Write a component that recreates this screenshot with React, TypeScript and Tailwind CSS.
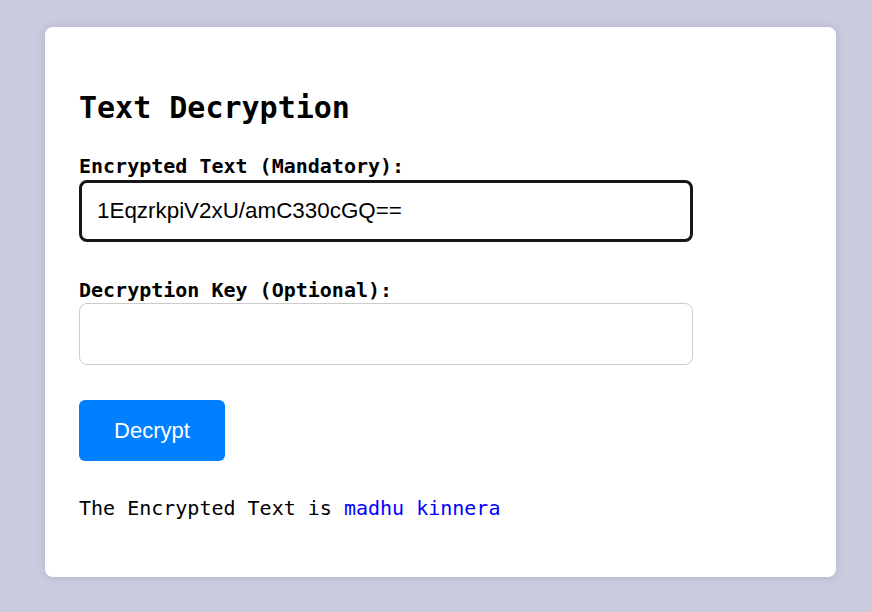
import React from "react";

export default function App() {
  const mono = { fontFamily: '"DejaVu Sans Mono", monospace' };
  return (
    <div className="h-[612px] w-[872px] bg-[#cbcbe0] pt-[27px] pl-[45px]">
      <div
        className="w-[791px] h-[550px] bg-white rounded-lg shadow-[0_0_10px_rgba(0,0,0,0.12)] px-[34px] pt-[63px] [font-family:'DejaVu_Sans_Mono',monospace]"
        style={mono}
      >
        <h1 className="text-[30px] leading-[36px] font-bold text-black">Text Decryption</h1>
        <label className="block mt-[28px] text-[20px] leading-[24px] font-bold text-black">
          Encrypted Text (Mandatory):
        </label>
        <input
          className="block mt-[2px] w-[614px] h-[62px] border-[3px] border-[#161616] rounded-lg px-[15px] text-[22.4px] text-black outline-none [font-family:'Liberation_Sans',Arial,sans-serif]"
          defaultValue="1EqzrkpiV2xU/amC330cGQ=="
        />
        <label className="block mt-[36px] text-[20px] leading-[24px] font-bold text-black">
          Decryption Key (Optional):
        </label>
        <input className="block mt-[1px] w-[614px] h-[62px] border border-[#cccccc] rounded-lg px-[15px] text-[22px] outline-none [font-family:'Liberation_Sans',Arial,sans-serif]" />
        <button className="block mt-[35px] w-[146px] h-[61px] bg-[#0080ff] text-white rounded-[6px] text-[22px] [font-family:'Liberation_Sans',Arial,sans-serif]">
          Decrypt
        </button>
        <p className="mt-[35px] text-[20px] leading-[24px] text-black">
          The Encrypted Text is <span className="text-[#0000ff]">madhu kinnera</span>
        </p>
      </div>
    </div>
  );
}
